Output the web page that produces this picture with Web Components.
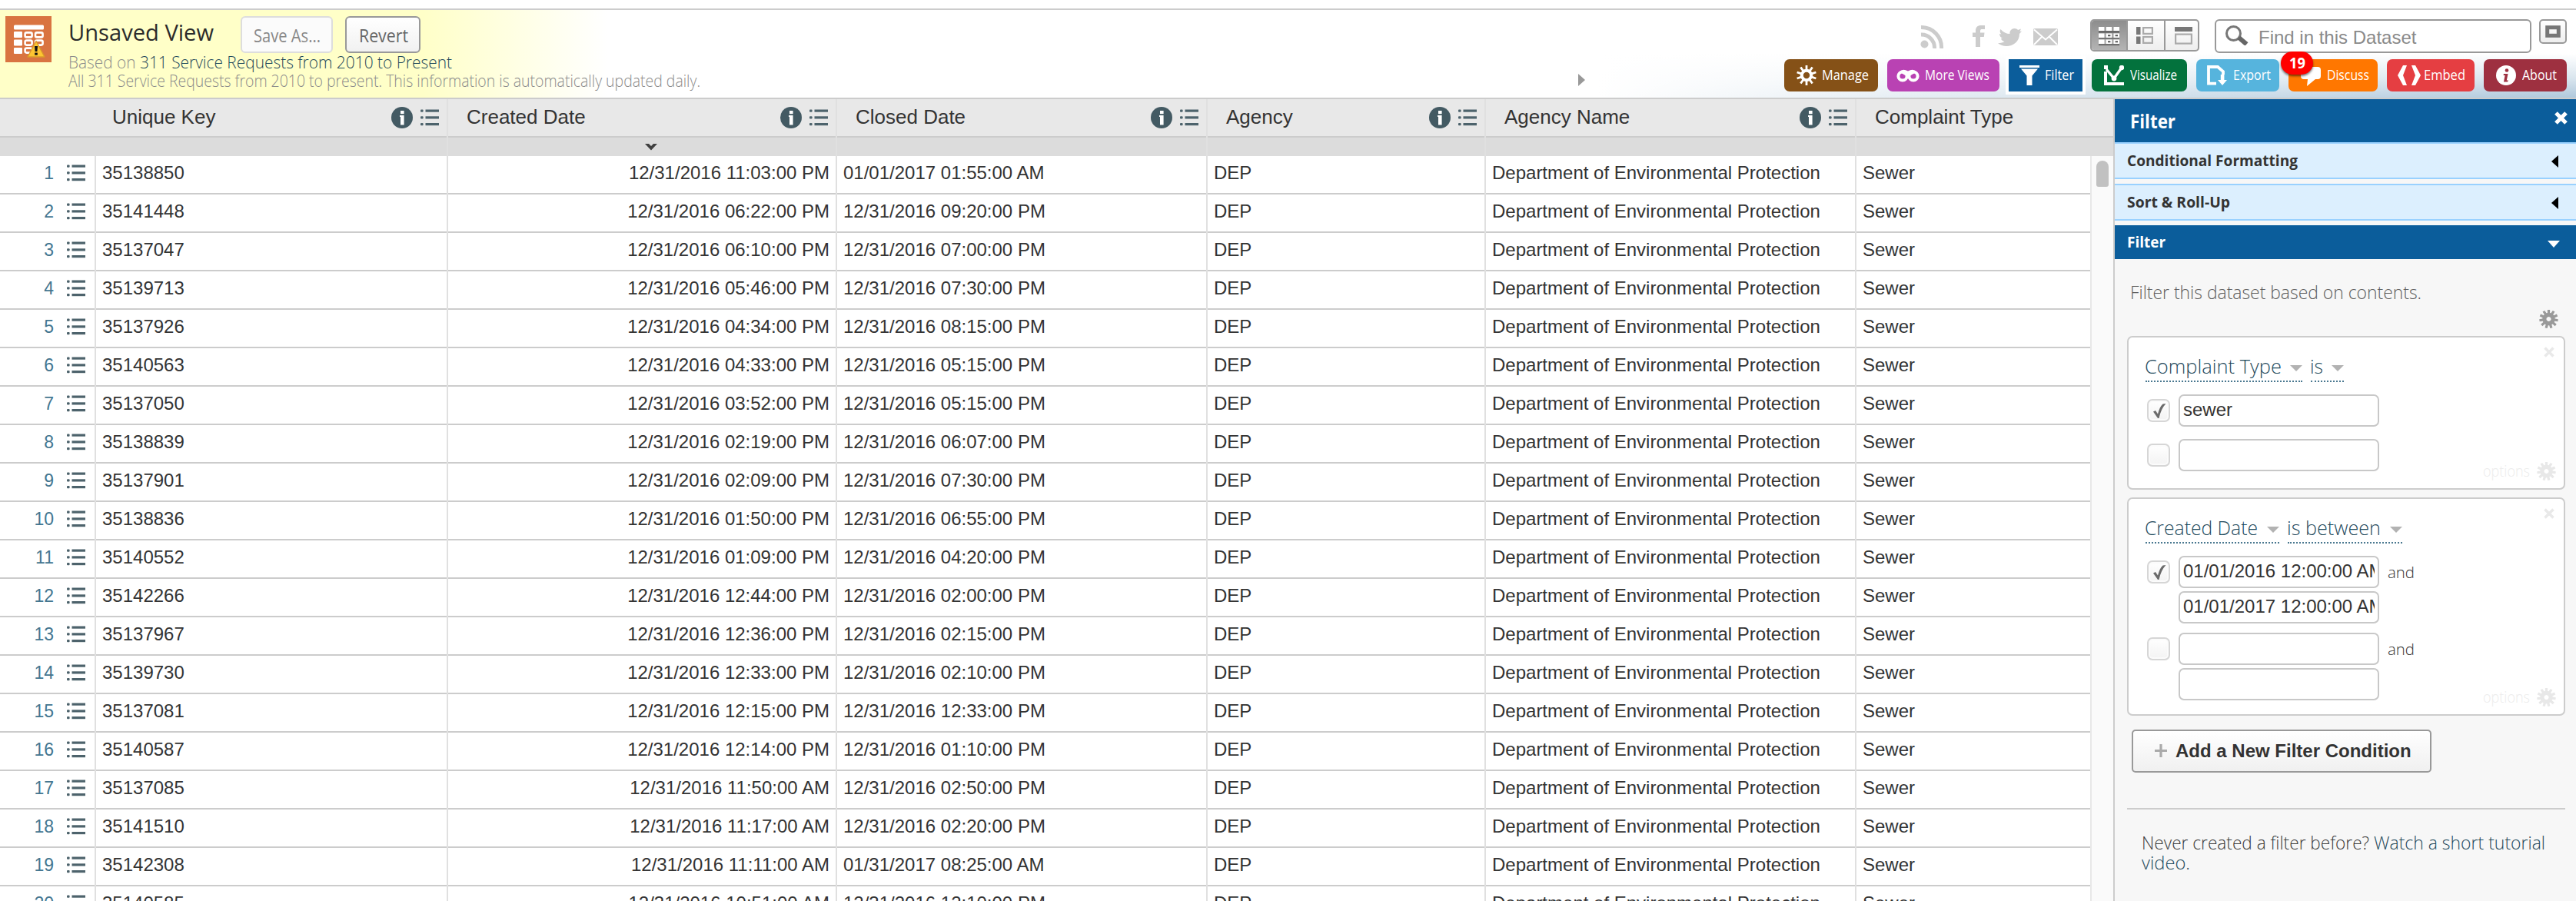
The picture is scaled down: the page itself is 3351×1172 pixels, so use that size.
<!DOCTYPE html>
<html lang="en">
<head>
<meta charset="utf-8">
<title>311 Service Requests</title>
<style>
html,body{margin:0;padding:0}
body{width:3351px;height:1172px;overflow:hidden;background:#fff;color:#333;font-family:"Liberation Sans",Arial,sans-serif}
</style>
</head>
<body>
<dataset-page></dataset-page>
<script>
const HUM = '"Open Sans","Noto Sans",sans-serif';

class BaseElement extends HTMLElement {
  connectedCallback() {
    if (this.shadowRoot) return;
    this.attachShadow({ mode: 'open' }).innerHTML = '<style>*{box-sizing:border-box}' + this.css() + '</style>' + this.html();
    this.ready();
  }
  css() { return ''; }
  html() { return '<slot></slot>'; }
  ready() {}
  attr(n, d = '') { return this.getAttribute(n) ?? d; }
}

/* Text condensed horizontally to a given advance width */
class FitText extends BaseElement {
  css() { return `:host{display:block;flex:none;white-space:nowrap;width:${this.attr('w')}px}
    span{display:inline-block;vertical-align:top;transform-origin:0 0}`; }
  html() { return '<span><slot></slot></span>'; }
  ready() {
    const s = this.shadowRoot.querySelector('span');
    const n = s.offsetWidth;
    if (n) s.style.transform = `scaleX(${(+this.attr('w') / s.getBoundingClientRect().width).toFixed(4)})`;
  }
}
customElements.define('fit-text', FitText);

const gearPath = (cx, cy, ro, ri, n) => {
  let d = '';
  for (let i = 0; i < n; i++) {
    const a = i * 2 * Math.PI / n - Math.PI / 2;
    const p = (r, t) => `${(cx + r * Math.cos(a + t)).toFixed(2)} ${(cy + r * Math.sin(a + t)).toFixed(2)}`;
    d += `${i ? 'L' : 'M'}${p(ri, -.2)}L${p(ro, -.13)}L${p(ro, .13)}L${p(ri, .2)}`;
  }
  return d + 'Z';
};
const ICONS = {
  info: [28, 28, '<circle cx="14" cy="14" r="14" fill="#435a63"/><rect x="12" y="5" width="4.6" height="4.2" fill="#fff"/><path d="M11 11h5.600v12.600h-4.600V13H11z" fill="#fff"/>'],
  list: [24, 22, '<g fill="#4d636c"><rect y=".500" width="3.600" height="3.200" rx="1"/><rect x="6.500" y=".500" width="17.500" height="3.200"/><rect y="9.300" width="3.600" height="3.200" rx="1"/><rect x="6.500" y="9.300" width="17.500" height="3.200"/><rect y="18" width="3.600" height="3.200" rx="1"/><rect x="6.500" y="18" width="17.500" height="3.200"/></g>'],
  dataset: [60, 60, `<rect width="60" height="60" fill="#d97441"/><rect x="11" y="11.5" width="39" height="6" rx="1.5" fill="#fff"/>
    <g fill="#fff"><rect x="11" y="20" width="11" height="8" rx="1"/><rect x="11" y="30.5" width="11" height="8" rx="1"/><rect x="11" y="41" width="11" height="8" rx="1"/></g>
    <g fill="none" stroke="#fff" stroke-width="2.6"><rect x="25.6" y="21.4" width="9" height="6" rx="2"/><rect x="39" y="21.4" width="9.6" height="6" rx="2"/><rect x="25.6" y="31.6" width="9" height="6" rx="2"/><rect x="39" y="31.6" width="9.6" height="6" rx="2"/><rect x="25.6" y="41.6" width="9" height="6" rx="2"/></g>
    <path d="M40 32.5L51 53H29z" fill="#fdc532" stroke="#d99a2b" stroke-width="1.4" stroke-linejoin="round"/><path d="M38 39h4l-.6 7h-2.8z" fill="#111"/><rect x="38.2" y="47.6" width="3.6" height="3" fill="#111"/>`],
  sort: [16, 9, '<path d="M0 0H5L8 3L11 0H16L8 8.6z" fill="#3f3f3f"/>'],
  expand: [9, 16, '<path d="M0 0L9 8L0 16z" fill="#999"/>'],
  rss: [31, 30, '<g fill="none" stroke="#ccc" stroke-width="5"><path d="M1 2.5A26 26 0 0 1 27.5 30"/><path d="M1 12A17 17 0 0 1 18.5 30"/></g><circle cx="5.5" cy="24.5" r="5" fill="#ccc"/>'],
  facebook: [16, 28, '<path d="M4 28V15H0V9.500H4V7C4 2.500 6.500 0 11 0h5v5h-3.500C10.800 5 10 5.600 10 7.200V9.500h5.500L14.800 15H10V28z" fill="#ccc"/>'],
  twitter: [31, 23, '<path d="M0 19C4 19 6.500 18.500 8.500 17C6 16.500 4.500 15 4 13H6C3.500 11.500 2 9.500 2 7L4.500 7.500C2.500 5.500 2 3 3.500 1C7 5 11 7 15.500 7C15 3 18 0 21.500 0C23.500 0 25 .700 26.200 2L30 .500L28.500 4L31 3.500L28 7C28 17 20 23 11 23C7 23 3 21.500 0 19z" fill="#ccc"/>'],
  mail: [32, 22, '<rect width="32" height="22" rx="2" fill="#ccc"/><path d="M1 1.500L16 14.500L31 1.500M1 21L11 11M31 21L21 11" fill="none" stroke="#fff" stroke-width="2"/>'],
  viewgrid: [27, 25, '<g fill="#fff"><path d="M0 1h7.500v5H0zM9.700 1h7.500v5H9.700zM19.500 1h7.500v5h-7.500zM0 9.500h7.500v5.500H0zM9.700 9.500h7.500v5.500H9.700zM19.500 9.500h7.500v5.500h-7.500zM0 17.500h7.500V23H0zM9.700 17.500h7.500V23H9.700zM19.500 17.500h7.500V23h-7.500z"/></g><g fill="#555"><path d="M0 6.500h27v2H0zM0 23.500h27v1.500H0zM0 15.300h27v1.200H0zM12 11.300h3.400v2H12zM21.600 11.300H25v2h-3.400zM12 19.300h3.400v2H12zM21.600 19.300H25v2h-3.400z"/></g>'],
  viewlist: [22, 22, '<g fill="#777"><rect width="5.500" height="10"/><rect y="12.500" width="5.500" height="9.500"/></g><g fill="none" stroke="#aaa" stroke-width="2.200"><rect x="9.100" y="1.100" width="11.800" height="7.800"/><rect x="9.100" y="13" width="11.800" height="7.900"/></g>'],
  viewpage: [23, 23, '<rect width="23" height="6" fill="#777"/><rect x="1.100" y="9.600" width="20.800" height="12" fill="none" stroke="#aaa" stroke-width="2.200"/>'],
  search: [31, 26, '<circle cx="11.500" cy="10.500" r="9" fill="none" stroke="#777" stroke-width="3"/><path d="M18.500 16L28.500 24.500" stroke="#666" stroke-width="6"/>'],
  frame: [20, 16, '<rect x="2.700" y="2.700" width="14.600" height="10.600" fill="none" stroke="#777" stroke-width="5"/>'],
  manage: [26, 26, '<circle cx="13" cy="13" r="6.200" fill="none" stroke="#fff" stroke-width="4"/><g stroke="#fff" stroke-width="2.800">' + [...Array(10)].map((_, i) => `<path d="M13 6V0" transform="rotate(${i * 36} 13 13)"/>`).join('') + '</g>'],
  views: [30, 17, '<g fill="none" stroke="#fff" stroke-width="4"><circle cx="8" cy="9" r="5.600"/><circle cx="22" cy="9" r="5.600"/></g><path d="M4 3.500Q8 -1.500 15 2.500Q22 -1.500 26 3.500L17 9H13z" fill="#fff"/>'],
  filter: [26, 26, '<path d="M0 0H26V3H0zM2 4.500H24L16.500 13.500V26H9.500V13.500z" fill="#fff"/>'],
  visualize: [26, 26, '<path d="M2 8V24H26" fill="none" stroke="#fff" stroke-width="4"/><path d="M3 5L13 17L23 3" fill="none" stroke="#fff" stroke-width="3.400"/><g fill="#fff"><rect width="5" height="5"/><circle cx="13" cy="17" r="3.400"/><circle cx="23" cy="3" r="3.200"/></g>'],
  export: [26, 26, '<path d="M12 23.700H2V2H14L21 8V12" fill="none" stroke="#fff" stroke-width="3.800"/><path d="M17.800 12h4.600v7H26L20 26L14 19h3.800z" fill="#fff"/>'],
  discuss: [26, 25, '<path d="M4 0H22Q26 0 26 4V12Q26 16 22 16H19L8 25L9 16H4Q0 16 0 12V4Q0 0 4 0z" fill="#fff"/>'],
  embed: [30, 26, '<path d="M7 0H12L7 13L12 26H7L0 13zM23 0H18L23 13L18 26H23L30 13z" fill="#fff"/>'],
  about: [26, 26, '<circle cx="13" cy="13" r="13" fill="#fff"/><circle cx="14" cy="6.500" r="2.300" fill="#9e3040"/><path d="M10 11H15.500L13.800 19.500H16L15 21.500H10L11.600 13H9.500z" fill="#9e3040"/>'],
  close: [17, 17, '<path d="M2 2L15 15M15 2L2 15" stroke="currentColor" stroke-width="5.200"/>'],
  closesmall: [14, 14, '<path d="M1.500 1.500L12.500 12.500M12.500 1.500L1.500 12.500" stroke="#e9e9e9" stroke-width="3.600"/>'],
  left: [9, 16, '<path d="M9 0L0 8L9 16z" fill="#000"/>'],
  down: [16, 9, '<path d="M0 0H16L8 9z" fill="#fff"/>'],
  caret: [16, 8, '<path d="M0 0H16L8 8z" fill="#b2b2b2"/>'],
  gear: [25, 24, `<path fill-rule="evenodd" d="${gearPath(12.5, 12, 12.3, 8.2, 11)}M12.500 9a3 3 0 1 0 .01 0z" fill="currentColor"/>`],
  plus: [16, 17, '<path d="M8 0V17M0 8.500H16" stroke="#aaa" stroke-width="3.200"/>'],
  check: [17, 22, '<path d="M0 11.500L3 10L6 14.500Q8.500 5 12.500 1.500L16.500 1Q10 8 7.500 20H6z" fill="#6a6a6a"/>']
};
class DsIcon extends BaseElement {
  css() { return ':host{display:block;flex:none;line-height:0}svg{display:block}'; }
  html() { const [w, h, m] = ICONS[this.attr('name')]; return `<svg width="${w}" height="${h}" viewBox="0 0 ${w} ${h}">${m}</svg>`; }
}
customElements.define('ds-icon', DsIcon);

class PushButton extends BaseElement {
  css() { return `:host{display:block;flex:none;box-sizing:border-box;width:${this.attr('w')}px;height:48px;border:2px solid #999;border-radius:6px;
    background:linear-gradient(#fff,#f1f1f1);color:#666;font:23px/46px ${HUM};padding-left:16px}
    :host([disabled]){border-color:#ddd;background:#fbfbfb;color:#888;padding-left:15px}`; }
}
customElements.define('push-button', PushButton);

class ToolButton extends BaseElement {
  css() { return `:host{display:flex;flex:none;align-items:flex-start;position:relative;box-sizing:border-box;width:${this.attr('w')}px;height:42px;border-radius:7px;
    background:${this.attr('color')};color:#fff;font:18px/40px ${HUM}}
    :host([active]){border-radius:0;box-shadow:0 0 0 4px #fff}
    ds-icon{margin:${this.attr('iy', 8)}px 0 0 ${this.attr('ix', 16)}px}
    .i{width:${this.attr('tx', 50)}px;flex:none}
    b{position:absolute;left:-10px;top:-10px;width:42px;height:30px;border-radius:15px;background:#f00;box-shadow:0 2px 3px rgba(0,0,0,.55);
      font:bold 19px/31px ${HUM};padding-left:11px}`; }
  html() { const b = this.attr('badge');
    return `<div class="i"><ds-icon name="${this.attr('icon')}"></ds-icon></div><fit-text w="${this.attr('tw')}">${this.attr('label')}</fit-text>${b ? `<b><fit-text w="21">${b}</fit-text></b>` : ''}`; }
}
customElements.define('tool-button', ToolButton);

class ViewToggle extends BaseElement {
  css() { return `:host{display:flex;flex:none;box-sizing:border-box;width:142px;height:42px;border:2px solid #999;border-radius:5px;overflow:hidden;background:linear-gradient(#fff,#eee)}
    div{height:38px;padding-top:8px}
    .grid{width:45px;padding:7px 0 0 9px;background:linear-gradient(#8d8d8d,#b4b4b4)}
    .list{width:49px;border-left:2px solid #999;padding-left:11px}
    .page{flex:1;border-left:2px solid #999;padding-left:12px}`; }
  html() { return ['grid', 'list', 'page'].map(n => `<div class="${n}"><ds-icon name="view${n}"></ds-icon></div>`).join(''); }
}
customElements.define('view-toggle', ViewToggle);

class SearchBox extends BaseElement {
  css() { return `:host{display:flex;flex:none;box-sizing:border-box;width:412px;height:44px;border:2px solid #999;border-radius:6px;background:#fff;
    font-size:24px;line-height:43px;color:#8a8a8a}
    ds-icon{margin:6px 13px 0 11px}`; }
  html() { return '<ds-icon name="search"></ds-icon><span>Find in this Dataset</span>'; }
}
customElements.define('search-box', SearchBox);

class PageHeader extends BaseElement {
  css() { return `:host{display:flex;box-sizing:border-box;height:118px;border-top:2px solid #ccc;border-bottom:2px solid #ccc;
    background:linear-gradient(90deg,#ffffc8 0,#ffffc8 550px,rgba(255,255,255,0) 790px),
      linear-gradient(90deg,#fff 2080px,rgba(255,255,255,0) 3351px),linear-gradient(#fff 50%,#d9e5ee 78%,#afc8dc)}
    .left{display:flex;flex:0 0 2053px;padding:8px 0 0 7px}
    .info{margin-left:22px;font:350 22px/24px ${HUM};color:#8c8c8c}
    .row{display:flex}
    .title{font-size:30px;line-height:42px;color:#2b2b2b;margin-right:35px;font-weight:500}
    .info push-button+push-button{margin-left:16px}
    .link{color:#1f4a5c}
    .base{line-height:23px}
    .arrow{margin-top:83px}
    .right{margin-left:auto;padding:12px 12px 0 0}
    .top{height:52px;justify-content:flex-end;align-items:flex-start}
    .tools{justify-content:flex-end;gap:12px}
    .full{box-sizing:border-box;width:36px;height:32px;border:2px solid #999;border-radius:5px;background:linear-gradient(#fff,#eee);padding:6px 0 0 6px;margin-left:10px}`; }
  html() { return `<div class="left"><ds-icon name="dataset"></ds-icon>
      <div class="info">
        <div class="row"><fit-text class="title" w="189">Unsaved View</fit-text>
          <push-button w="120" disabled><fit-text w="87">Save As...</fit-text></push-button>
          <push-button w="98"><fit-text w="64">Revert</fit-text></push-button></div>
        <div class="row base"><fit-text w="93">Based on&nbsp;</fit-text><fit-text class="link" w="406">311 Service Requests from 2010 to Present</fit-text></div>
        <fit-text w="822">All 311 Service Requests from 2010 to present. This information is automatically updated daily.</fit-text>
      </div></div>
    <ds-icon class="arrow" name="expand"></ds-icon>
    <div class="right">
      <div class="row top">
        <ds-icon name="rss" style="margin-top:8px"></ds-icon>
        <ds-icon name="facebook" style="margin:8px 0 0 37px"></ds-icon>
        <ds-icon name="twitter" style="margin:12px 0 0 17px"></ds-icon>
        <ds-icon name="mail" style="margin:12px 42px 0 15px"></ds-icon>
        <view-toggle></view-toggle>
        <search-box style="margin-left:20px"></search-box>
        <div class="full"><ds-icon name="frame"></ds-icon></div>
      </div>
      <div class="row tools">
        <tool-button icon="manage" w="122" color="#855117" label="Manage" tw="61" tx="49"></tool-button>
        <tool-button icon="views" w="146" color="#b942b3" label="More Views" tw="84" ix="12" iy="13" tx="49"></tool-button>
        <tool-button icon="filter" w="96" color="#0b5d9b" label="Filter" tw="38" ix="14" tx="47" active></tool-button>
        <tool-button icon="visualize" w="124" color="#03723d" label="Visualize" tw="61"></tool-button>
        <tool-button icon="export" w="108" color="#56b4dd" label="Export" tw="49" ix="14" tx="48"></tool-button>
        <tool-button icon="discuss" w="116" color="#ff7700" label="Discuss" tw="55" iy="10" tx="50" badge="19"></tool-button>
        <tool-button icon="embed" w="114" color="#e53e42" label="Embed" tw="54" ix="14" tx="48"></tool-button>
        <tool-button icon="about" w="108" color="#9e3040" label="About" tw="45"></tool-button>
      </div>
    </div>`; }
}
customElements.define('page-header', PageHeader);

class ColumnHeader extends BaseElement {
  css() { return `:host{display:flex;flex-direction:column;flex:none;box-sizing:border-box;width:${this.attr('w')}px;height:74px;border-right:2px solid #e0e0e0}
    :host([last]){flex:1;width:auto;border-right:0}
    .t{display:flex;align-items:center;height:50px;border-bottom:2px solid #ccc;background:#e8e8e8;padding:0 10px 0 ${this.attr('pad', 24)}px;font-size:26px;gap:10px}
    .t span{flex:1;line-height:46px;margin-top:-2px}
    .s{height:24px;background:#dcdcdc;display:flex;justify-content:center;padding-top:8px}
    .s ds-icon{margin-left:24px}`; }
  html() { return `<div class="t"><span>${this.attr('label')}</span>${this.hasAttribute('last') ? '' : '<ds-icon name="info"></ds-icon><ds-icon name="list"></ds-icon>'}</div>
    <div class="s">${this.hasAttribute('sorted') ? '<ds-icon name="sort"></ds-icon>' : ''}</div>`; }
}
customElements.define('column-header', ColumnHeader);

class DataRow extends BaseElement {
  css() { return `:host{display:flex;height:50px;flex:none;font-size:24px;line-height:43px}
    div{flex:none;height:50px;padding:0 8px 0 8px;border-right:2px solid #e0e0e0;background:linear-gradient(#ccc,#ccc) 0 100%/100% 2px no-repeat padding-box;white-space:nowrap}
    .n{width:125px;display:flex;justify-content:flex-end;padding:0 12px 0 0;font-size:23px;line-height:44px;color:#447690}
    .n ds-icon{margin:11px 0 0 17px}
    .k{width:458px}.c{width:506px;text-align:right}.d{width:482px}.a{width:362px}.g{width:482px}.t{flex:1;border-right:0}`; }
  html() { const a = n => this.attr(n);
    return `<div class="n">${a('n')}<ds-icon name="list"></ds-icon></div><div class="k">${a('key')}</div><div class="c">${a('created')}</div><div class="d">${a('closed')}</div>
      <div class="a">DEP</div><div class="g">Department of Environmental Protection</div><div class="t">Sewer</div>`; }
}
customElements.define('data-row', DataRow);

const D = '12/31/2016 ';
const ROWS = [
  ['35138850', '11:03:00 PM', '01/01/2017 01:55:00 AM'], ['35141448', '06:22:00 PM', D + '09:20:00 PM'],
  ['35137047', '06:10:00 PM', D + '07:00:00 PM'], ['35139713', '05:46:00 PM', D + '07:30:00 PM'],
  ['35137926', '04:34:00 PM', D + '08:15:00 PM'], ['35140563', '04:33:00 PM', D + '05:15:00 PM'],
  ['35137050', '03:52:00 PM', D + '05:15:00 PM'], ['35138839', '02:19:00 PM', D + '06:07:00 PM'],
  ['35137901', '02:09:00 PM', D + '07:30:00 PM'], ['35138836', '01:50:00 PM', D + '06:55:00 PM'],
  ['35140552', '01:09:00 PM', D + '04:20:00 PM'], ['35142266', '12:44:00 PM', D + '02:00:00 PM'],
  ['35137967', '12:36:00 PM', D + '02:15:00 PM'], ['35139730', '12:33:00 PM', D + '02:10:00 PM'],
  ['35137081', '12:15:00 PM', D + '12:33:00 PM'], ['35140587', '12:14:00 PM', D + '01:10:00 PM'],
  ['35137085', '11:50:00 AM', D + '02:50:00 PM'], ['35141510', '11:17:00 AM', D + '02:20:00 PM'],
  ['35142308', '11:11:00 AM', '01/31/2017 08:25:00 AM'], ['35140585', '10:51:00 AM', D + '12:10:00 PM']
];
class DataGrid extends BaseElement {
  css() { return `:host{display:flex;flex-direction:column;width:2749px;height:100%;flex:none;overflow:hidden}
    .h{display:flex;flex:none}
    .b{display:flex;flex:1;min-height:0;overflow:hidden}
    .rows{width:2719px;display:flex;flex-direction:column}
    .bar{flex:1;border-left:2px solid #e8e8e8;background:#fafafa;padding:6px 0 0 6px}
    .thumb{width:16px;height:34px;border-radius:8px 8px 3px 3px;background:#c1c1c1}`; }
  html() { return `<div class="h"><column-header w="583" pad="146" label="Unique Key"></column-header>
      <column-header w="506" label="Created Date" sorted></column-header>
      <column-header w="482" label="Closed Date"></column-header>
      <column-header w="362" label="Agency"></column-header>
      <column-header w="482" label="Agency Name"></column-header>
      <column-header last label="Complaint Type"></column-header></div>
    <div class="b"><div class="rows">${ROWS.map((r, i) => `<data-row n="${i + 1}" key="${r[0]}" created="${D + r[1]}" closed="${r[2]}"></data-row>`).join('')}</div>
      <div class="bar"><div class="thumb"></div></div></div>`; }
}
customElements.define('data-grid', DataGrid);

class PaneTab extends BaseElement {
  css() { return `:host{display:flex;justify-content:space-between;align-items:flex-start;box-sizing:border-box;height:48px;margin-bottom:6px;border-top:2px solid #99d1ff;border-bottom:2px solid #99d1ff;
    background:#dceffe;color:#333;font:bold 20px/44px ${HUM};padding:0 23px 0 16px}
    ds-icon{margin-top:15px}
    :host([open]){height:44px;border:0;background:#0b5d9b;color:#fff;padding-right:21px;margin:0}
    :host([open]) ds-icon{margin-top:20px}`; }
  html() { return `<fit-text w="${this.attr('tw')}"><slot></slot></fit-text><ds-icon name="${this.hasAttribute('open') ? 'down' : 'left'}"></ds-icon>`; }
}
customElements.define('pane-tab', PaneTab);

class LinkSelect extends BaseElement {
  css() { return `:host{display:flex;flex:none;justify-content:space-between;box-sizing:border-box;width:${this.attr('w')}px;height:34px;border-bottom:2px dotted #4a7890;
    font:350 26px/27px ${HUM};color:#1f4a5c}
    fit-text{margin-left:-1px}ds-icon{margin-top:12px}`; }
  html() { return `<fit-text w="${this.attr('tw')}">${this.attr('label')}</fit-text><ds-icon name="caret"></ds-icon>`; }
}
customElements.define('link-select', LinkSelect);

class CheckBox extends BaseElement {
  css() { return `:host{display:flex;flex:none;box-sizing:border-box;width:30px;height:30px;margin:6px 11px 0 2px;border:2px solid #d6d6d6;border-radius:7px;background:linear-gradient(#fff,#f3f3f3);
    box-shadow:inset 0 0 0 2px #fbfbfb;padding:3px 0 0 6px}`; }
  html() { return this.hasAttribute('checked') ? '<ds-icon name="check"></ds-icon>' : ''; }
}
customElements.define('check-box', CheckBox);

class TextField extends BaseElement {
  css() { return `:host{display:block;flex:none;box-sizing:border-box;width:261px;height:42px;border:2px solid #c8c8c8;border-radius:7px;background:#fff;padding:0 4px;font-size:24px;line-height:35px;color:#333}
    div{overflow:hidden;white-space:nowrap;height:38px}`; }
  html() { return '<div><slot></slot></div>'; }
}
customElements.define('text-field', TextField);

class FilterCard extends BaseElement {
  css() { return `:host{display:flex;justify-content:space-between;box-sizing:border-box;height:${this.attr('h')}px;border:2px solid #ccc;border-radius:7px;background:#fff}
    .l{padding:24px 0 0 22px}
    .r{display:flex;flex-direction:column;justify-content:space-between;align-items:flex-end;padding:12px 10px 10px 0;font:300 20px/24px ${HUM}}
    .r ds-icon[name=closesmall]{margin-right:2px}
    .o{display:flex;gap:9px;color:#ececec}
    .s{display:flex;gap:11px;margin-bottom:16px}`; }
  html() { return `<div class="l"><div class="s"><slot name="subject"></slot></div><slot></slot></div>
    <div class="r"><ds-icon name="closesmall"></ds-icon><div class="o"><fit-text w="61">options</fit-text><ds-icon name="gear" style="color:#e8e8e8"></ds-icon></div></div>`; }
}
customElements.define('filter-card', FilterCard);

class FilterRow extends BaseElement {
  css() { return `:host{display:flex;margin-bottom:${this.attr('gap', 16)}px}
    .f{display:flex;flex-direction:column;gap:4px}
    .a{margin-left:11px;font:350 21px/43px ${HUM};color:#333}`; }
  html() { return `<check-box ${this.hasAttribute('checked') ? 'checked' : ''}></check-box><div class="f"><slot></slot></div>${this.hasAttribute('and') ? '<fit-text class="a" w="35">and</fit-text>' : ''}`; }
}
customElements.define('filter-row', FilterRow);

class FilterPane extends BaseElement {
  css() { return `:host{display:block;flex:1;box-sizing:border-box;border-left:2px solid #ccc;background:#f7f7f7}
    .head{display:flex;justify-content:space-between;align-items:flex-start;height:56px;background:#0b5d9b;color:#fff;font:bold 25px/56px ${HUM};padding:0 11px 0 20px}
    .head ds-icon{margin-top:16px}
    .body{padding:0 14px 0 16px}
    .intro{font:350 24px/28px ${HUM};color:#5c5c5c;padding:29px 0 0 4px;height:66px}
    .g{display:flex;justify-content:flex-end;color:#999;padding-right:9px;height:34px}
    filter-card{margin-bottom:10px}
    .add{display:flex;align-items:flex-start;width:390px;height:56px;margin:18px 0 46px 6px;border:2px solid #999;border-radius:5px;background:linear-gradient(#fff,#f0f0f0);
      font-weight:bold;font-size:24px;line-height:51px;color:#333;padding-left:28px;text-shadow:0 2px 0 #fff}
    .add ds-icon{margin:17px 11px 0 0}
    hr{border:0;height:2px;background:#ccc;margin:0}
    .help{font:350 24px/26px ${HUM};color:#3c3c3c;padding:30px 0 0 19px}
    .help div{display:flex}
    .link{color:#1f4a5c}`; }
  html() { return `<div class="head"><fit-text w="59">Filter</fit-text><ds-icon name="close"></ds-icon></div>
    <pane-tab tw="222">Conditional Formatting</pane-tab>
    <pane-tab tw="134">Sort &amp; Roll-Up</pane-tab>
    <pane-tab tw="50" open>Filter</pane-tab>
    <div class="body">
      <div class="intro"><fit-text w="379">Filter this dataset based on contents.</fit-text></div>
      <div class="g"><ds-icon name="gear"></ds-icon></div>
      <filter-card h="200">
        <link-select slot="subject" w="204" tw="178" label="Complaint Type"></link-select><link-select slot="subject" w="43" tw="17" label="is"></link-select>
        <filter-row checked><text-field>sewer</text-field></filter-row>
        <filter-row><text-field></text-field></filter-row>
      </filter-card>
      <filter-card h="284">
        <link-select slot="subject" w="174" tw="147" label="Created Date"></link-select><link-select slot="subject" w="149" tw="122" label="is between"></link-select>
        <filter-row checked and gap="12"><text-field>01/01/2016 12:00:00 AM</text-field><text-field>01/01/2017 12:00:00 AM</text-field></filter-row>
        <filter-row and gap="12"><text-field></text-field><text-field></text-field></filter-row>
      </filter-card>
      <div class="add"><ds-icon name="plus"></ds-icon><span>Add a New Filter Condition</span></div>
      <hr>
      <div class="help"><div><fit-text w="302">Never created a filter before?&nbsp;</fit-text><fit-text class="link" w="223">Watch a short tutorial</fit-text></div>
        <fit-text class="link" w="63">video.</fit-text></div>
    </div>`; }
}
customElements.define('filter-pane', FilterPane);

class DatasetPage extends BaseElement {
  css() { return `:host{display:flex;flex-direction:column;width:3351px;height:1172px;box-sizing:border-box;padding-top:11px;overflow:hidden}
    page-header{flex:none}
    .main{display:flex;flex:1;min-height:0}`; }
  html() { return '<page-header></page-header><div class="main"><data-grid></data-grid><filter-pane></filter-pane></div>'; }
}
customElements.define('dataset-page', DatasetPage);
</script>
</body>
</html>
